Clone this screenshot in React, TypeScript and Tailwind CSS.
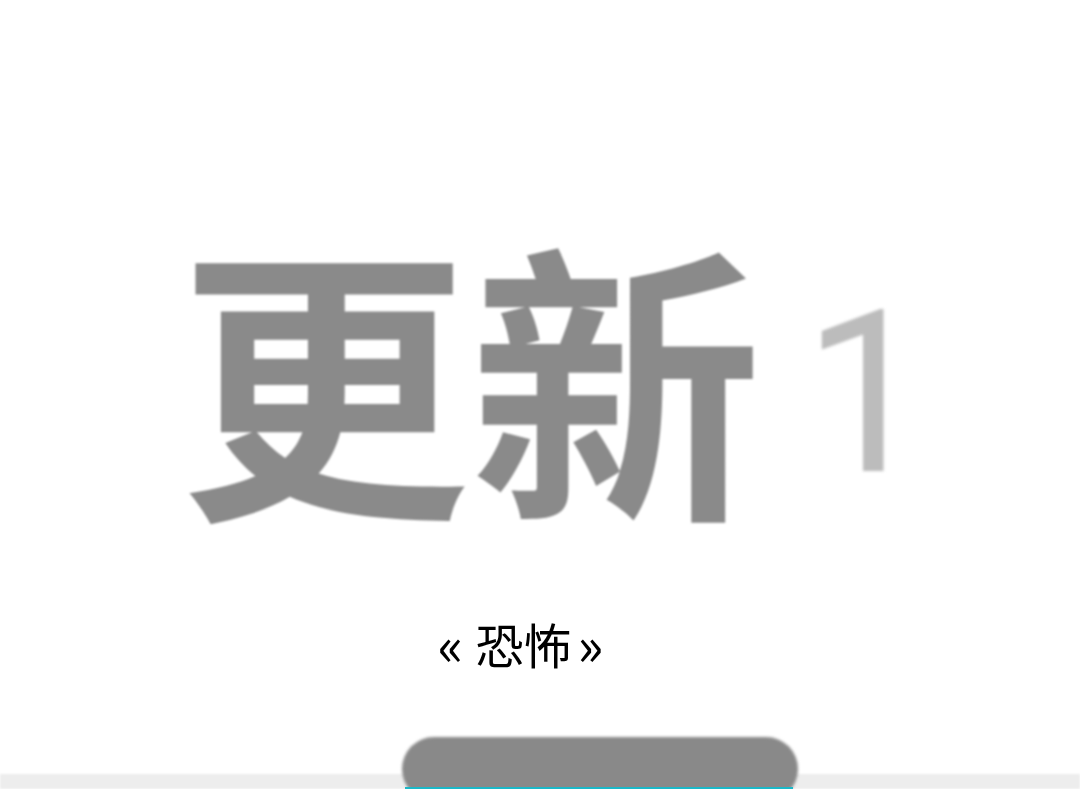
import React from "react";

export default function App() {
  return (
    <div className="w-[1080px] h-[789px] bg-white overflow-hidden flex flex-col items-center">
      <div className="mt-[226px] h-[290px] flex items-center pl-[28px]">
        <span className="text-[292px] leading-none font-bold text-[#8a8a8a] font-['Noto_Sans_CJK_SC',sans-serif] blur-[1.2px]">
          更新
        </span>
        <span className="ml-[41px] mt-[46px] text-[226px] leading-none font-normal text-[#bcbcbc] font-['Roboto',sans-serif] blur-[1.5px]">
          1
        </span>
      </div>
      <div className="mt-[100px] pr-[34px] text-[48px] leading-none text-black font-['Noto_Sans_CJK_SC',sans-serif] blur-[0.4px] flex items-center">
        <span className="-ml-[5px] mr-[12px] text-[54px]">«</span>
        <span>恐怖</span>
        <span className="ml-[6px] text-[54px]">»</span>
      </div>
      <div className="mt-auto w-full h-[52px] relative flex justify-start">
        <div className="absolute left-0 right-0 bottom-0 h-[15px] bg-[#ededed] blur-[1px]"></div>
        <div className="relative ml-[402px] w-[396px] h-[64px] rounded-full bg-[#898989] blur-[1.5px]"></div>
        <div className="absolute bottom-0 left-[405px] w-[388px] h-[2px] bg-[#1bb8c8]"></div>
      </div>
    </div>
  );
}
